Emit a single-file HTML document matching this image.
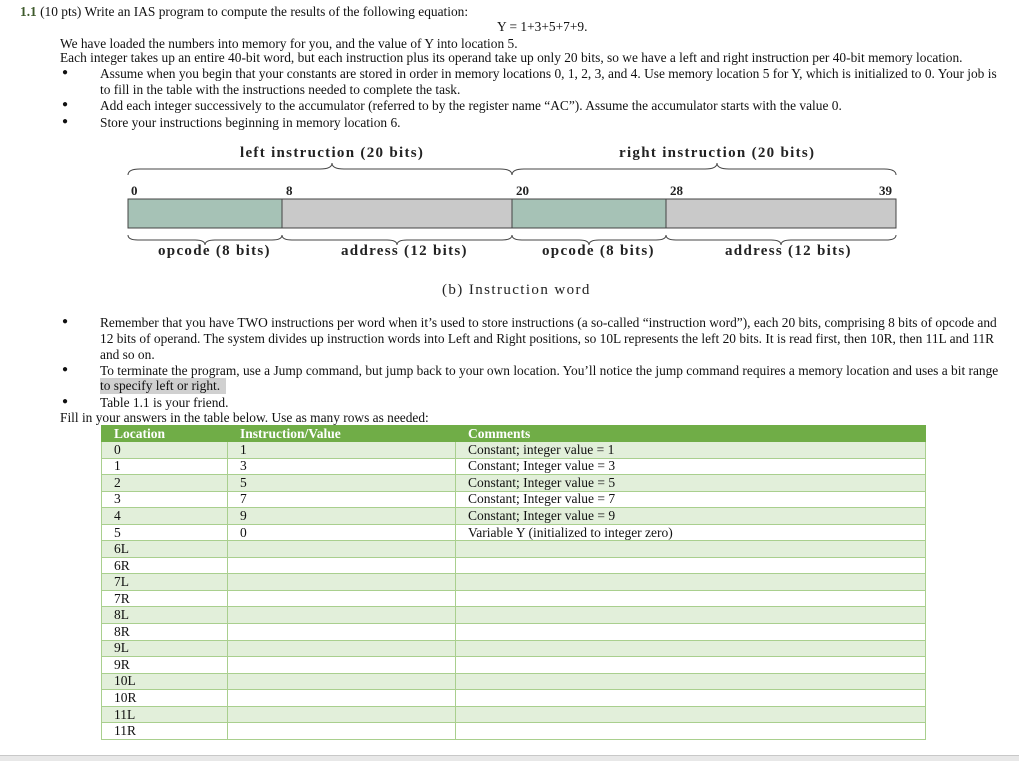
<!DOCTYPE html>
<html><head><meta charset="utf-8"><style>
body{margin:0;width:1019px;height:760px;background:#fff;position:relative;overflow:hidden;font-family:"Liberation Serif",serif;font-size:13.4px;color:#111}
.t{position:absolute;white-space:nowrap;line-height:16px}
.b{position:absolute;left:62px;font-size:10px}
.d{font-family:"Liberation Serif",serif;font-weight:bold;font-size:15px;letter-spacing:1.3px;color:#222;position:absolute;white-space:nowrap}
table{position:absolute;left:101px;top:425px;width:825px;border-collapse:collapse;font-size:13.5px}
tr{height:16.55px}
td{border:1px solid #a9cf8e;padding:0 0 0 12px;line-height:14px}
tr.h{height:16px}
tr.h td{background:#70ad47;color:#fff;font-weight:bold;border-color:#70ad47}
tr:nth-child(even) td{background:#e2efda}
</style></head><body>
<div class="t" style="left:20px;top:4px"><b style="color:#3e5a2c">1.1</b> (10 pts) Write an IAS program to compute the results of the following equation:</div>
<div class="t" style="left:497px;top:19px">Y = 1+3+5+7+9.</div>
<div class="t" style="left:60px;top:36px">We have loaded the numbers into memory for you, and the value of Y into location 5.</div>
<div class="t" style="left:60px;top:50px">Each integer takes up an entire 40-bit word, but each instruction plus its operand take up only 20 bits, so we have a left and right instruction per 40-bit memory location.</div>
<div class="b" style="top:67px">●</div>
<div class="t" style="left:100px;top:66px">Assume when you begin that your constants are stored in order in memory locations 0, 1, 2, 3, and 4. Use memory location 5 for Y, which is initialized to 0. Your job is</div>
<div class="t" style="left:100px;top:82px">to fill in the table with the instructions needed to complete the task.</div>
<div class="b" style="top:99px">●</div>
<div class="t" style="left:100px;top:98px">Add each integer successively to the accumulator (referred to by the register name “AC”). Assume the accumulator starts with the value 0.</div>
<div class="b" style="top:116px">●</div>
<div class="t" style="left:100px;top:115px">Store your instructions beginning in memory location 6.</div>

<div class="d" style="left:240px;top:145px">left instruction (20 bits)</div>
<div class="d" style="left:619px;top:145px">right instruction (20 bits)</div>
<svg style="position:absolute;left:0;top:0" width="1019" height="310">
<g fill="none" stroke="#444" stroke-width="1">
<path d="M128 175 Q128 169 140 169 L320 169 Q332 169 332 163 Q332 169 344 169 L500 169 Q512 169 512 175"/>
<path d="M512 175 Q512 169 524 169 L705 169 Q717 169 717 163 Q717 169 729 169 L884 169 Q896 169 896 175"/>
<path d="M128 235 Q128 240 138 240 L195 240 Q205 240 205 245 Q205 240 215 240 L272 240 Q282 240 282 235"/>
<path d="M282 235 Q282 240 292 240 L387 240 Q397 240 397 245 Q397 240 407 240 L502 240 Q512 240 512 235"/>
<path d="M512 235 Q512 240 522 240 L579 240 Q589 240 589 245 Q589 240 599 240 L656 240 Q666 240 666 235"/>
<path d="M666 235 Q666 240 676 240 L771 240 Q781 240 781 245 Q781 240 791 240 L886 240 Q896 240 896 235"/>
</g>
<rect x="128" y="199" width="154" height="29" fill="#a6c2b6" stroke="#444"/>
<rect x="282" y="199" width="230" height="29" fill="#c9c9c9" stroke="#444"/>
<rect x="512" y="199" width="154" height="29" fill="#a6c2b6" stroke="#444"/>
<rect x="666" y="199" width="230" height="29" fill="#c9c9c9" stroke="#444"/>
</svg>
<div class="d" style="left:131px;top:183px;font-size:13px;letter-spacing:0">0</div>
<div class="d" style="left:286px;top:183px;font-size:13px;letter-spacing:0">8</div>
<div class="d" style="left:516px;top:183px;font-size:13px;letter-spacing:0">20</div>
<div class="d" style="left:670px;top:183px;font-size:13px;letter-spacing:0">28</div>
<div class="d" style="left:879px;top:183px;font-size:13px;letter-spacing:0">39</div>
<div class="d" style="left:158px;top:243px">opcode (8 bits)</div>
<div class="d" style="left:341px;top:243px">address (12 bits)</div>
<div class="d" style="left:542px;top:243px">opcode (8 bits)</div>
<div class="d" style="left:725px;top:243px">address (12 bits)</div>
<div class="d" style="left:442px;top:282px;font-weight:normal;letter-spacing:1.4px">(b) Instruction word</div>

<div class="b" style="top:316px">●</div>
<div class="t" style="left:100px;top:315px">Remember that you have TWO instructions per word when it’s used to store instructions (a so-called “instruction word”), each 20 bits, comprising 8 bits of opcode and</div>
<div class="t" style="left:100px;top:331px">12 bits of operand. The system divides up instruction words into Left and Right positions, so 10L represents the left 20 bits. It is read first, then 10R, then 11L and 11R</div>
<div class="t" style="left:100px;top:347px">and so on.</div>
<div class="b" style="top:364px">●</div>
<div class="t" style="left:100px;top:363px">To terminate the program, use a Jump command, but jump back to your own location. You’ll notice the jump command requires a memory location and uses a bit range</div>
<div class="t" style="left:100px;top:378px;background:#d0d0d0;padding-right:6px">to specify left or right.</div>
<div class="b" style="top:396px">●</div>
<div class="t" style="left:100px;top:395px">Table 1.1 is your friend.</div>
<div class="t" style="left:60px;top:410px">Fill in your answers in the table below. Use as many rows as needed:</div>

<table>
<tr class="h"><td style="width:113px">Location</td><td style="width:215px">Instruction/Value</td><td>Comments</td></tr>
<tr><td>0</td><td>1</td><td>Constant; integer value = 1</td></tr>
<tr><td>1</td><td>3</td><td>Constant; Integer value = 3</td></tr>
<tr><td>2</td><td>5</td><td>Constant; Integer value = 5</td></tr>
<tr><td>3</td><td>7</td><td>Constant; Integer value = 7</td></tr>
<tr><td>4</td><td>9</td><td>Constant; Integer value = 9</td></tr>
<tr><td>5</td><td>0</td><td>Variable Y (initialized to integer zero)</td></tr>
<tr><td>6L</td><td></td><td></td></tr>
<tr><td>6R</td><td></td><td></td></tr>
<tr><td>7L</td><td></td><td></td></tr>
<tr><td>7R</td><td></td><td></td></tr>
<tr><td>8L</td><td></td><td></td></tr>
<tr><td>8R</td><td></td><td></td></tr>
<tr><td>9L</td><td></td><td></td></tr>
<tr><td>9R</td><td></td><td></td></tr>
<tr><td>10L</td><td></td><td></td></tr>
<tr><td>10R</td><td></td><td></td></tr>
<tr><td>11L</td><td></td><td></td></tr>
<tr><td>11R</td><td></td><td></td></tr>
</table>
<div style="position:absolute;left:0;top:755px;width:1019px;height:5px;background:#e8e8e8;border-top:1px solid #c8c8c8"></div>
</body></html>
